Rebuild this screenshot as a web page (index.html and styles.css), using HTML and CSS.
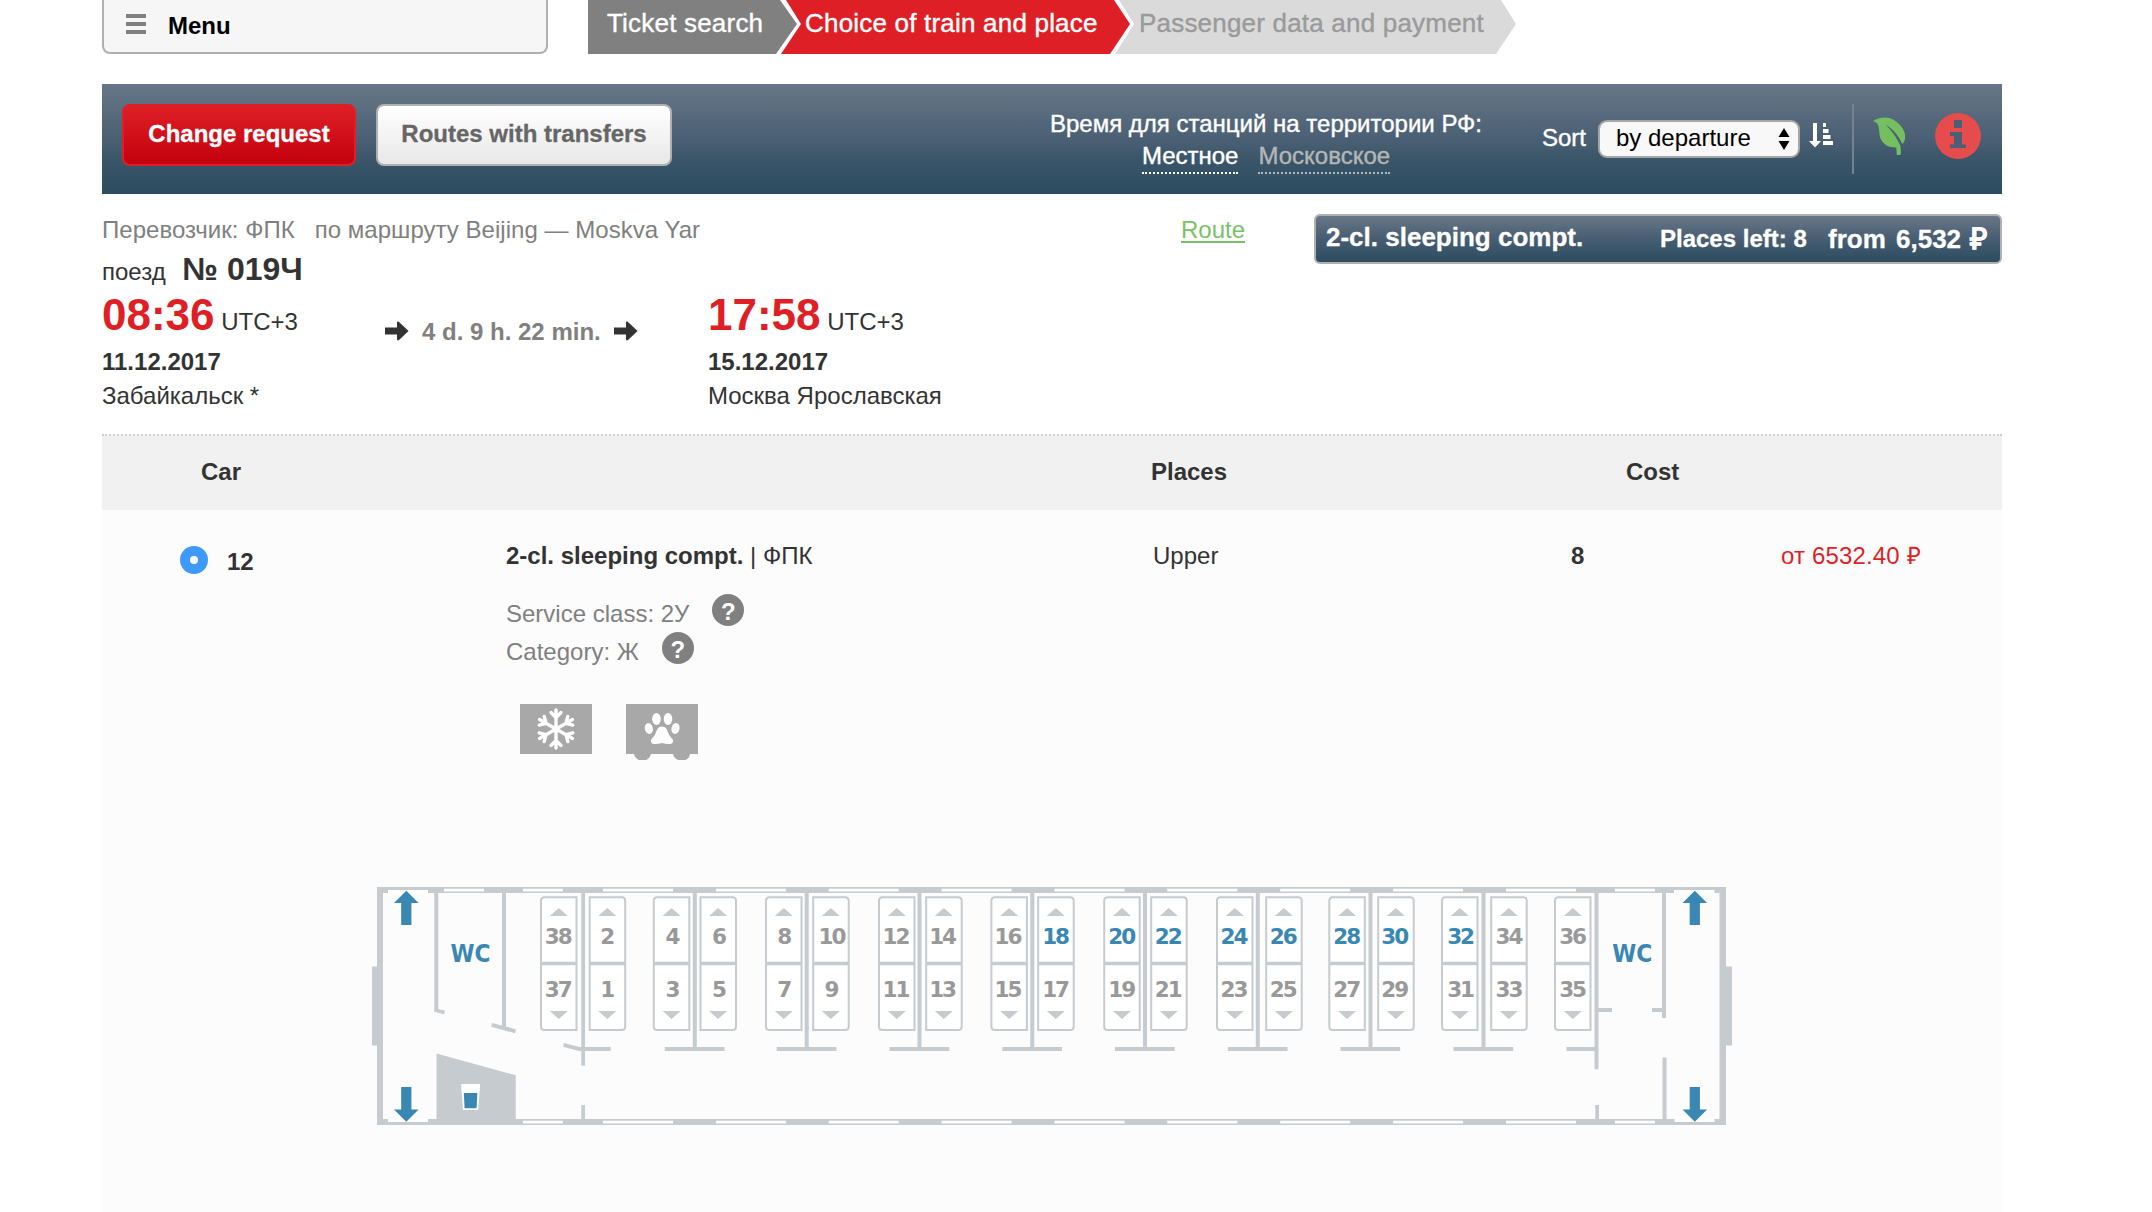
FILE: index.html
```html
<!DOCTYPE html>
<html lang="en">
<head>
<meta charset="utf-8">
<title>Choice of train and place</title>
<link rel="stylesheet" href="styles.css">
</head>
<body>
<div class="page">
  <header class="top">
    <button class="menu"><svg class="burger" viewBox="0 0 20 20"><path d="M0 0h20v4H0zM0 8h20v4H0zM0 16h20v4H0z"/></svg>Menu</button>
    <nav class="steps">
      <span class="step done">Ticket search</span>
      <span class="step current">Choice of train and place</span>
      <span class="step next">Passenger data and payment</span>
    </nav>
  </header>

  <section class="toolbar">
    <button class="btn red">Change request</button>
    <button class="btn white">Routes with transfers</button>
    <div class="timezone">
      <div>Время для станций на территории РФ:</div>
      <div class="zones"><a class="zone active">Местное</a><a class="zone">Московское</a></div>
    </div>
    <label class="sort">Sort</label>
    <div class="select"><span>by departure</span><svg class="updown" viewBox="0 0 12 22"><path d="M6 0l5.500 9H.5zM6 22l5.500-9H.5z"/></svg></div>
    <svg class="order" viewBox="0 0 24 25"><path d="M4 0h4v18h4l-6 6.500L0 18h4zM14 0h3v4h-3zM14 6h5.500v4H14zM14 12h7.500v4H14zM14 18h10v4H14z"/></svg>
    <i class="divider"></i>
    <svg class="leaf" viewBox="0 0 32 39"><path d="M0 4C6 0 15-1 21 3c9 6 12 13 11 19-.4 2.600-1.600 4-2.800 5C26 19 20 12 12.500 7.500 19 14 24 21 27.500 29l.5 8.500-4.200.8-.5-7.800C15 31 8 26 6.800 19 5.800 12 7 6 0 4z"/></svg>
    <svg class="info" viewBox="0 0 46 46"><circle cx="23" cy="23" r="23" fill="#e74c4c"/><path fill="#4b6074" d="M19 7h8v8h-8zM15 19h12v12.500h4V35H15v-3.500h4V23h-4z"/></svg>
  </section>

  <section class="train">
    <div class="info-col">
      <div class="carrier"><span>Перевозчик: ФПК</span><span>по маршруту Beijing — Moskva Yar</span></div>
      <div class="number">поезд <b>№ 019Ч</b></div>
      <div class="trip">
        <div class="stop">
          <div class="time"><b>08:36</b> UTC+3</div>
          <div class="date">11.12.2017</div>
          <div class="station">Забайкальск *</div>
        </div>
        <div class="duration">
          <svg class="arrow" viewBox="0 0 24 20"><path d="M0 6.500h12V2c0-1.500 1-1.800 2-1l9.600 9L14 19c-1 .8-2 .4-2-1v-4.500H0z"/></svg>
          <span>4 d. 9 h. 22 min.</span>
          <svg class="arrow" viewBox="0 0 24 20"><path d="M0 6.500h12V2c0-1.500 1-1.800 2-1l9.600 9L14 19c-1 .8-2 .4-2-1v-4.500H0z"/></svg>
        </div>
        <div class="stop">
          <div class="time"><b>17:58</b> UTC+3</div>
          <div class="date">15.12.2017</div>
          <div class="station">Москва Ярославская</div>
        </div>
      </div>
    </div>
    <a class="route">Route</a>
    <button class="offer"><span class="cls">2-cl. sleeping compt.</span><span class="left">Places left: 8</span><span class="from">from</span><span class="sum">6,532</span><span class="rub">₽</span></button>
  </section>

  <section class="cars">
    <div class="row head"><span class="car">Car</span><span></span><span>Places</span><span class="cost">Cost</span></div>
    <div class="row item">
      <div class="pick"><i class="radio"></i><b>12</b></div>
      <div class="about">
        <div><b>2-cl. sleeping compt.</b> | ФПК</div>
        <div class="meta first">Service class: 2У <i class="help">?</i></div>
        <div class="meta">Category: Ж <i class="help">?</i></div>
        <div class="features">
          <svg viewBox="0 0 72 56"><path fill="#a8a8a8" d="M0 0h72v50H0z"/><g id="flake" fill="none" stroke="#fff" stroke-width="3.400" stroke-linecap="round"><g id="arm"><path d="M36 25V6M31 8.500l5 5 5-5"/></g><use href="#arm" transform="rotate(60 36 25)"/><use href="#arm" transform="rotate(120 36 25)"/><use href="#arm" transform="rotate(180 36 25)"/><use href="#arm" transform="rotate(240 36 25)"/><use href="#arm" transform="rotate(300 36 25)"/></g></svg>
          <svg viewBox="0 0 72 56"><path fill="#a8a8a8" d="M0 0h72v50h-8c-1 9-15 9-17 0H25c-2 9-15 9-17 0H0z"/><g fill="#fff"><ellipse cx="30.500" cy="15" rx="4.300" ry="6"/><ellipse cx="42" cy="15" rx="4.300" ry="6"/><ellipse cx="22.800" cy="24.500" rx="4" ry="5.500" transform="rotate(-14 22.800 24.500)"/><ellipse cx="49.500" cy="24.500" rx="4" ry="5.500" transform="rotate(14 49.500 24.500)"/><path d="M36 22.500c4 0 5 3 6.500 7 1.500 4 5 5 4.500 8-.6 3.500-5 2.800-11 1.500-6 1.300-10.400 2-11-1.500-.5-3 3-4 4.500-8 1.500-4 2.500-7 6.500-7z"/></g></svg>
        </div>
      </div>
      <div>Upper</div>
      <b>8</b>
      <div class="price">от 6532.40 ₽</div>
    </div>

    <svg class="carriage" viewBox="360 870 1400 270">
      <defs>
        <g id="seatL"><path class="box" d="M36.500 1.200H4.500q-3.500 0-3.500 3.500V130.500q0 3.500 3.500 3.500H36.500z"/><path class="mid" d="M1 67.500H36.500"/><path class="tri" d="M18.800 12l9 8h-18zM18.800 123l9-8h-18z"/></g>
        <g id="seatR"><path class="box" d="M1.200 1.200H33.200q3.500 0 3.500 3.500V130.500q0 3.500-3.500 3.500H1.200z"/><path class="mid" d="M1 67.500H36.500"/><path class="tri" d="M18.800 12l9 8h-18zM18.800 123l9-8h-18z"/></g>
        <path id="win" d="M0 0h70v2.600H0z"/>
        <path id="tee" d="M-2 893h4v154h27.700v4H-30v-4h28z"/>
        <path id="exit" d="M0 890.800l12.300 12.200h-7.200v22H-5.100v-22h-7.200zM0 1121.800l12.300-12.300h-7.200V1087H-5.100v22.500h-7.200z"/>
      </defs>
      <path class="wall" fill-rule="evenodd" d="M377 887H1726V1125H377zM383 893V1119H1719.500V893z"/>
      <path class="wall" d="M372 966.500h5v79h-5zM1726 966.500h6v79h-6z"/>
      <g class="gap">
        <path d="M388 890h40v4h-40zM388 1118.500h40v3.500h-40zM1674 890h40.500v4H1674zM1674.500 1118.500h40v3.500h-40z"/>
        <path d="M444 888.800h40v2.700h-40zM523 888.800h40v2.700h-40zM1615 888.800h40v2.700h-40zM523 1120.800h40v2.600h-40zM1615 1120.800h40v2.600h-40z"/>
        <g id="wins"><use href="#win" x="603" y="888.800"/><use href="#win" x="715.900" y="888.800"/><use href="#win" x="828.700" y="888.800"/><use href="#win" x="941.600" y="888.800"/><use href="#win" x="1054.500" y="888.800"/><use href="#win" x="1167.300" y="888.800"/><use href="#win" x="1280.200" y="888.800"/><use href="#win" x="1393.100" y="888.800"/><use href="#win" x="1506" y="888.800"/></g>
        <use href="#wins" y="232"/>
      </g>
      <g class="wall">
        <path d="M434.300 893h4v116l6.800 1.700-1 3.600-9.800-2.500zM502 893h4v133.500l10 3-1 3.800-23.800-6.600 1-3.700 9.800 2.600zM581.300 893h3.700v154h25.700v4H585v14.700h-3.700V1051h-2.700l-15.600-4.300 1-3.700 15.500 4h1.800zM581.300 1105h3.700v15h-3.700z"/>
        <path d="M436.500 1053.500l79.200 21.700V1120h-79.200z"/>
        <path d="M1594.500 893h4v115h13.500v4h-13.500v57.200h-4V1051h-28v-4h28zM1595.300 1105h3.700v15h-3.700zM1662 893h4v125h-4v-6h-10v-4h10zM1662.500 1057.500h4v62h-4z"/>
        <use href="#tee" x="694.800"/><use href="#tee" x="806.700"/><use href="#tee" x="919.500"/><use href="#tee" x="1032.300"/><use href="#tee" x="1145"/><use href="#tee" x="1257.800"/><use href="#tee" x="1370.500"/><use href="#tee" x="1483.500"/>
      </g>
      <path fill="#fff" d="M461 1084h19.200l-2 26h-15.200z"/><path class="blue" d="M463.800 1093h13.500l-.7 15.200h-12z"/>
      <use class="blue" href="#exit" x="406.300"/><use class="blue" href="#exit" x="1694.800"/>
      <text class="wc" x="450.500" y="961.500" textLength="40" lengthAdjust="spacingAndGlyphs">WC</text>
      <text class="wc" x="1612.300" y="961.500" textLength="40" lengthAdjust="spacingAndGlyphs">WC</text>
      <g>
        <use href="#seatL" x="540" y="896"/><use href="#seatR" x="588.500" y="896"/>
        <use href="#seatL" x="652.800" y="896"/><use href="#seatR" x="699.300" y="896"/>
        <use href="#seatL" x="765" y="896"/><use href="#seatR" x="812" y="896"/>
        <use href="#seatL" x="878" y="896"/><use href="#seatR" x="925" y="896"/>
        <use href="#seatL" x="990.400" y="896"/><use href="#seatR" x="1037" y="896"/>
        <use href="#seatL" x="1103.200" y="896"/><use href="#seatR" x="1150" y="896"/>
        <use href="#seatL" x="1216" y="896"/><use href="#seatR" x="1265" y="896"/>
        <use href="#seatL" x="1328.300" y="896"/><use href="#seatR" x="1377" y="896"/>
        <use href="#seatL" x="1441" y="896"/><use href="#seatR" x="1490" y="896"/>
        <use href="#seatL" x="1554" y="896"/>
      </g>
      <g class="num" transform="translate(-1.200 0)">
        <text x="559" y="944">38</text><text x="559" y="997">37</text>
        <text x="608" y="944">2</text><text x="608" y="997">1</text>
        <text x="673.300" y="944">4</text><text x="673.300" y="997">3</text>
        <text x="719.700" y="944">6</text><text x="719.700" y="997">5</text>
        <text x="785" y="944">8</text><text x="785" y="997">7</text>
        <text x="832.700" y="944">10</text><text x="832.200" y="997">9</text>
        <text x="896.700" y="944">12</text><text x="896.700" y="997">11</text>
        <text x="943.300" y="944">14</text><text x="943.300" y="997">13</text>
        <text x="1008.700" y="944">16</text><text x="1008.700" y="997">15</text>
        <text class="free" x="1056.300" y="944">18</text><text x="1056.300" y="997">17</text>
        <text class="free" x="1122.500" y="944">20</text><text x="1122.500" y="997">19</text>
        <text class="free" x="1169" y="944">22</text><text x="1169" y="997">21</text>
        <text class="free" x="1234.700" y="944">24</text><text x="1234.700" y="997">23</text>
        <text class="free" x="1284" y="944">26</text><text x="1284" y="997">25</text>
        <text class="free" x="1347.500" y="944">28</text><text x="1347.500" y="997">27</text>
        <text class="free" x="1395.500" y="944">30</text><text x="1395.500" y="997">29</text>
        <text class="free" x="1461.300" y="944">32</text><text x="1461.300" y="997">31</text>
        <text x="1509.700" y="944">34</text><text x="1509.700" y="997">33</text>
        <text x="1573.300" y="944">36</text><text x="1573.300" y="997">35</text>
      </g>
    </svg>
  </section>
</div>
</body>
</html>
```
FILE: styles.css
```css
* { box-sizing: border-box; }
body {
  margin: 0;
  background: #fff;
  color: #333;
  font: 24px/30px "Liberation Sans", Arial, sans-serif;
  overflow: hidden;
}
button { font: inherit; margin: 0; padding: 0; white-space: nowrap; }
svg { display: block; flex: none; }
.page { width: 1900px; height: 1212px; margin-left: 102px; overflow: hidden; display: flex; flex-direction: column; }

.top { display: flex; height: 54px; flex: none; }
.menu {
  width: 446px; height: 54px; padding: 0 0 1px 22px;
  display: flex; align-items: center;
  border: 2px solid #b0b0b0; border-top: 0; border-radius: 0 0 8px 8px;
  background: #f6f6f6; color: #000; font-weight: bold;
}
.burger { width: 20px; height: 20px; margin: -3px 22px 0 0; fill: #808080; }
.steps { display: flex; margin-left: 40px; font-size: 26px; letter-spacing: .2px; -webkit-text-stroke: .4px; }
.step { height: 54px; line-height: 46px; white-space: nowrap; }
.done { width: 210px; padding-left: 19px; background: #808080; color: #fff; clip-path: polygon(0 0, 192px 0, 209px 24px, 188px 100%, 0 100%); }
.current { width: 349px; margin-left: -17px; padding-left: 24px; background: #df1f26; color: #fff; clip-path: polygon(5px 0, 333px 0, 349px 24px, 329px 100%, 0 100%, 20px 24px); }
.next { width: 401px; margin-left: -15px; padding-left: 24px; background: #dadada; color: #9a9a9a; clip-path: polygon(4px 0, 386px 0, 401px 24px, 381px 100%, 0 100%, 19px 24px); }

.toolbar {
  display: flex; align-items: flex-start; flex: none;
  height: 110px; margin-top: 30px; padding: 20px 20px 0;
  background: linear-gradient(#687787, #475d72 55%, #3c566a 66%, #2c4c60);
  color: #fff;
}
.btn { height: 62px; border-radius: 8px; font-weight: bold; padding-bottom: 3px; -webkit-text-stroke: .3px; }
.red { width: 234px; border: 2px solid #df1f26; background: linear-gradient(#df1f26, #c3000d); color: #fff; }
.white { width: 296px; margin-left: 20px; border: 2px solid #b0b0b0; background: linear-gradient(#fff, #e8e8e8); color: #666; }
.timezone { width: 440px; margin: 4px 0 0 374px; text-align: center; line-height: 32px; white-space: nowrap; -webkit-text-stroke: .4px; }
.zones { display: flex; justify-content: center; gap: 20px; }
.zone { height: 34px; line-height: 32px; color: #b5b5b5; border-bottom: 2px dotted #b5b5b5; }
.zone.active { color: #fff; border-color: #fff; }
.sort { width: 56px; margin: 19px 0 0 56px; -webkit-text-stroke: .4px; }
.select {
  width: 202px; height: 38px; margin-top: 16px; padding: 0 8px 0 16px;
  display: flex; align-items: center; justify-content: space-between;
  border: 2px solid #a6a6a6; border-radius: 9px; background: #f8f8f8; color: #000;
}
.select span { margin-top: -2px; }
.updown { width: 12px; height: 22px; }
.order { width: 24px; height: 25px; margin: 19px 0 0 9px; fill: #fff; }
.divider { width: 2px; height: 70px; margin-left: 19px; background: #76828c; }
.leaf { width: 32px; height: 39px; margin: 13px 0 0 19px; fill: #74c060; }
.info { width: 46px; height: 46px; margin: 9px 0 0 30px; }

.train { display: flex; height: 240px; padding-top: 20px; flex: none; }
.info-col { width: 1079px; padding-top: 1px; white-space: nowrap; }
.carrier { display: flex; gap: 20px; color: #808080; letter-spacing: .03px; }
.number { height: 36px; line-height: 36px; margin-top: 6px; }
.number b { font-size: 32px; margin-left: 10px; }
.trip { display: flex; margin-top: 3px; }
.stop { width: 283px; }
.time { height: 50px; line-height: 50px; }
.time b { font-size: 44px; color: #df1f26; }
.date { margin-top: 7px; font-weight: bold; }
.station { margin-top: 4px; }
.duration { display: flex; align-items: center; gap: 13px; width: 323px; height: 30px; margin-top: 27px; color: #808080; font-weight: bold; }
.arrow { width: 24px; height: 20px; margin-top: -2px; fill: #333; }
.route { width: 64px; height: 30px; margin-top: 1px; color: #77c267; text-decoration: underline; text-decoration-thickness: 2px; text-underline-offset: 3px; }
.offer {
  width: 688px; height: 50px; margin-left: 69px; padding: 1px 10px 2px; display: flex; align-items: center;
  border: 2px solid #b0b0b0; border-radius: 6px;
  background: linear-gradient(#687787, #475d72 50%, #2c4c60);
  color: #fff; font-weight: bold; font-size: 26px; text-align: left;
  -webkit-text-stroke: .3px;
}
.cls { width: 334px; margin-top: -3px; }
.left { width: 168px; margin-top: 1px; font-size: 24px; }
.from { width: 68px; }
.sum { width: 74px; }
.rub { font-size: 30px; }

.cars { flex: 1; background: #fcfcfc; border-top: 2px dotted #ccc; }
.row { display: grid; grid-template-columns: 404px 646px 418px 210px auto; white-space: nowrap; }
.head { height: 74px; padding-top: 21px; background: #f1f1f1; font-weight: bold; }
.head .car { padding-left: 99px; }
.head .cost { padding-left: 56px; }
.head > :nth-child(3) { margin-left: -1px; }
.item { padding-top: 31px; height: 376px; }
.item > * { padding-left: 1px; }
.pick { display: flex; margin-top: 6px; }
.item > .pick { padding-left: 78px; }
.item > .about { padding-left: 0; }
.radio { width: 28px; height: 28px; margin: -1px 19px 0 0; border: 10px solid #3f99fb; border-radius: 50%; background: #fff; }
.meta { height: 38px; line-height: 38px; color: #808080; display: flex; }
.meta.first { margin-top: 24px; }
.help { width: 32px; height: 32px; margin: -1px 0 0 23px; border-radius: 50%; background: #808080; color: #fff; font: bold 24px/36px "Liberation Sans", Arial, sans-serif; text-align: center; }
.features { display: flex; gap: 34px; margin: 33px 0 0 14px; }
.features svg { width: 72px; height: 56px; }
.price { color: #df1f26; letter-spacing: .15px; }

.carriage { width: 1400px; height: 270px; margin: -16px 0 0 258px; }
.wall { fill: #c5cbcf; }
.gap { fill: #fff; }
.box { fill: #fff; stroke: #c5cbcf; stroke-width: 2; }
.mid { stroke: #c5cbcf; stroke-width: 3.400; }
.tri { fill: #c5cbcf; }
.blue { fill: #3987b3; }
.num { font: bold 21.500px "DejaVu Sans", sans-serif; fill: #999; text-anchor: middle; letter-spacing: -2px; }
.free { fill: #3987b3; }
.wc { font: bold 24px "DejaVu Sans", sans-serif; fill: #3987b3; }
```
